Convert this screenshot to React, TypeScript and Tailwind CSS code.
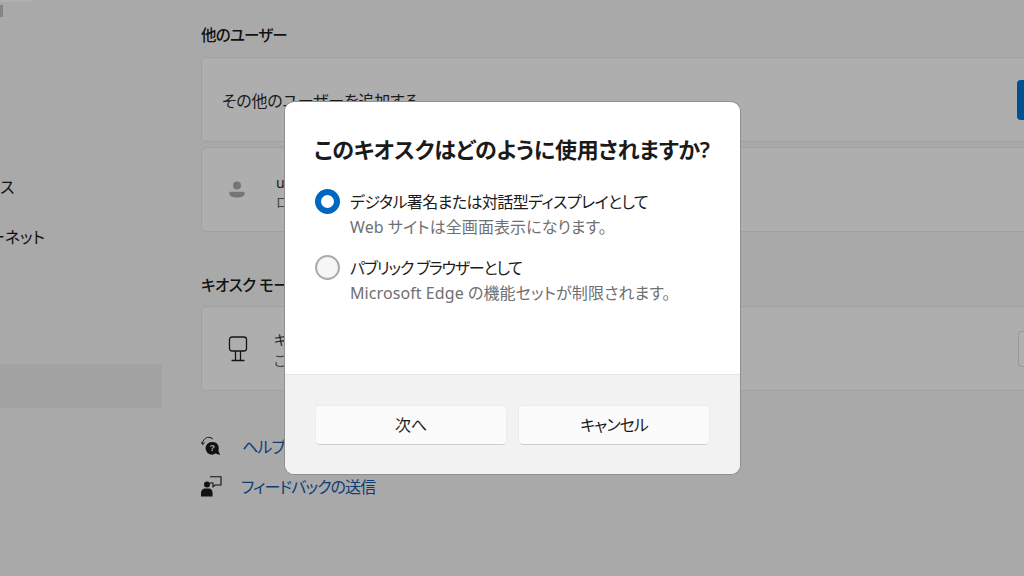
const font = "font-['Noto_Sans','Noto_Sans_CJK_JP',sans-serif] [font-feature-settings:'palt']";

function UserIcon() {
  return (
    <svg width="16" height="19" viewBox="0 0 18 20" fill="#757575">
      <circle cx="9" cy="5.500" r="4.500" />
      <path d="M1.500 12.500h15c.6 0 1 .4 1 1v1c0 3-3.500 4.500-8.500 4.500S.5 17.500.5 14.500v-1c0-.6.4-1 1-1z" />
    </svg>
  );
}

function KioskIcon() {
  return (
    <svg width="20" height="26" viewBox="0 0 20 26" fill="none" stroke="#141414" strokeWidth="1.300">
      <rect x="1.500" y="1" width="17" height="14" rx="2.500" />
      <path d="M7.500 15v9M12.500 15v9M3.500 24.500h13" />
    </svg>
  );
}

function HelpIcon() {
  return (
    <svg width="20" height="20" viewBox="0 0 22 22" fill="none">
      <path d="M1.800 8.500C1.800 4.500 5 1.500 8.500 1.500c2 0 3.500.8 4.700 2" stroke="#111" strokeWidth="1.100" />
      <path d="M.6 6.500 1.800 9.500l2.300-2.200" stroke="#111" strokeWidth="1.100" />
      <path d="M12.500 6.500a7 7 0 0 1 6.600 9.400l1.900 5-5-1.600A7 7 0 1 1 12.500 6.500z" fill="#111" />
      <text x="12.500" y="17" fontSize="10" fontWeight="700" fill="#aaa" textAnchor="middle" fontFamily="Liberation Sans">?</text>
    </svg>
  );
}

function FeedbackIcon() {
  return (
    <svg width="21" height="21" viewBox="0 0 21 21" fill="none">
      <circle cx="6" cy="8.500" r="3" fill="#111" />
      <path d="M0 20.500v-3.500c0-3 2-4.500 4-4.500h4c2 0 3.500 1.500 3.500 4.500v3.500z" fill="#111" />
      <path d="M9 .8h11v8.200h-6l-2 1.800V7.500" stroke="#111" strokeWidth="1.100" />
      <path d="M9 7h3.500" stroke="#111" strokeWidth="1.100" />
    </svg>
  );
}

function Radio({ checked }: { checked?: boolean }) {
  if (checked) {
    return <div className="w-[25px] h-[25px] shrink-0 rounded-full border-[6px] border-[#0067c0] bg-white" />;
  }
  return <div className="w-[25px] h-[25px] shrink-0 rounded-full border-2 border-[#ababab] bg-[#f6f6f6]" />;
}

function Option({ title, sub, titleClass, checked }: { title: string; sub: string; titleClass: string; checked?: boolean }) {
  return (
    <div className="flex gap-[10px] h-[50px]">
      <div className="pt-[1px]">
        <Radio checked={checked} />
      </div>
      <div className="flex flex-col pt-[1px]">
        <div className={`h-[26px] leading-[26px] text-[16px] text-[#1b1b1b] whitespace-nowrap ${titleClass}`}>{title}</div>
        <div className="h-[24px] leading-[24px] text-[16px] text-[#707070] whitespace-nowrap tracking-[0.08px]">{sub}</div>
      </div>
    </div>
  );
}

export default function App() {
  return (
    <div className={`relative w-[1024px] h-[576px] overflow-hidden bg-[#a9a9a9] flex ${font}`}>
      {/* sidebar, scrolled off to the left */}
      <div className="w-[201px] shrink-0 relative text-[#111] overflow-hidden">
        <div className="w-[33px] h-[2px] bg-[#b0b0b0]" />
        <div className="w-[3px] h-[12px] mt-[3px] bg-[#858585]" />
        <div className="mt-[158px] h-[24px] leading-[24px] text-[16px]">ス</div>
        <div className="mt-[26px] -ml-[11px] h-[24px] leading-[24px] text-[16px] whitespace-nowrap">ーネット</div>
        <div className="mt-[115px] w-[162px] h-[44px] bg-[#a3a3a3]" />
      </div>

      {/* settings column */}
      <div className="flex-1 min-w-0 text-[#111]">
        <div className="h-[57px] pt-[24px] text-[15.500px] leading-[22px] font-medium whitespace-nowrap tracking-[-0.8px]">他のユーザー</div>

        <div className="h-[85px] rounded-l-[5px] bg-[#aeaeae] border-y border-l border-[#a0a0a0] flex items-center justify-between pl-[20px]">
          <span className="text-[16px] text-[#1a1a1a] mt-[3px] tracking-[-0.2px]">その他のユーザーを追加する</span>
          <div className="w-[7px] h-[40px] rounded-l-[4px] bg-[#004f8f]" />
        </div>

        <div className="mt-[5px] h-[85px] rounded-l-[5px] bg-[#aeaeae] border-y border-l border-[#a0a0a0] flex items-center">
          <div className="w-[74px] flex justify-center pr-[5px]">
            <UserIcon />
          </div>
          <div className="flex flex-col text-[14px] leading-[19px] text-[#1a1a1a] mt-[5px]">
            <span>user</span>
            <span className="text-[#444]">ローカル アカウント</span>
          </div>
        </div>

        <div className="mt-[42px] h-[32px] text-[15.500px] leading-[22px] font-medium whitespace-nowrap tracking-[-0.5px]">キオスク モード</div>

        <div className="h-[85px] rounded-l-[5px] bg-[#aeaeae] border-y border-l border-[#a0a0a0] flex items-center justify-between">
          <div className="flex items-center">
            <div className="w-[72px] flex justify-center">
              <KioskIcon />
            </div>
            <div className="flex flex-col text-[14px] leading-[21px] text-[#1a1a1a] mt-[3px]">
              <span>キオスク</span>
              <span className="text-[#444]">これは</span>
            </div>
          </div>
          <div className="w-[6px] h-[36px] rounded-l-[4px] border-y border-l border-[#999] bg-[#b0b0b0]" />
        </div>

        <div className="mt-[43px] flex items-center h-[24px]">
          <div className="w-[41px]">
            <HelpIcon />
          </div>
          <span className="text-[#0f3c73] text-[16px] mt-[2px] tracking-[-0.9px]">ヘルプを表示</span>
        </div>
        <div className="mt-[16px] flex items-center h-[24px]">
          <div className="w-[40px]">
            <FeedbackIcon />
          </div>
          <span className="text-[#0f3c73] text-[16px] mt-[2px] tracking-[-0.9px]">フィードバックの送信</span>
        </div>
      </div>

      {/* dialog */}
      <div className="absolute left-[285px] top-[102px] w-[455px] h-[372px] rounded-[9px] overflow-hidden bg-white shadow-[0_0_0_1px_#909090] flex flex-col">
        <div className="h-[272px] px-[29px] pt-[29px] flex flex-col">
          <div className="text-[22px] leading-[36px] h-[36px] font-semibold text-[#1a1a1a] whitespace-nowrap tracking-[-0.25px]">このキオスクはどのように使用されますか?</div>
          <div className="mt-[21px] pl-[1px] flex flex-col gap-[16px]">
            <Option checked titleClass="tracking-[-0.6px]" title="デジタル署名または対話型ディスプレイとして" sub="Web サイトは全画面表示になります。" />
            <Option titleClass="tracking-[-1.200px]" title="パブリック ブラウザーとして" sub="Microsoft Edge の機能セットが制限されます。" />
          </div>
        </div>
        <div className="flex-1 bg-[#f2f2f2] border-t border-[#e5e5e5] flex gap-[11px] pl-[30px] pt-[30px]">
          <button className="w-[192px] h-[40px] rounded-[5px] bg-[#fbfbfb] border border-[#ececec] border-b-[#cfcfcf] text-[16px] text-[#1b1b1b]">次へ</button>
          <button className="w-[192px] h-[40px] rounded-[5px] bg-[#fbfbfb] border border-[#ececec] border-b-[#cfcfcf] text-[16px] text-[#1b1b1b] tracking-[-1px]">キャンセル</button>
        </div>
      </div>
    </div>
  );
}
